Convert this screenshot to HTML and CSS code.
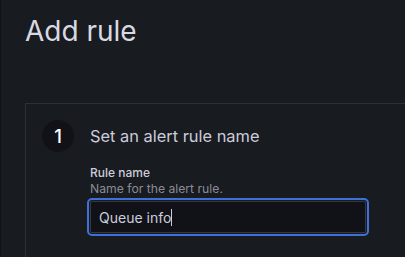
FILE: index.html
```html
<!DOCTYPE html>
<html>
<head>
<meta charset="utf-8">
<link rel="stylesheet" href="styles.css">
</head>
<body>
<div class="page">
  <h1 class="page-title">Add rule</h1>
  <section class="card">
    <div class="step-head">
      <div class="step-num">1</div>
      <h2 class="step-title">Set an alert rule name</h2>
    </div>
    <div class="field">
      <div class="label">Rule name</div>
      <div class="desc">Name for the alert rule.</div>
      <div class="input"><span class="value">Queue info</span><span class="caret"></span></div>
    </div>
  </section>
</div>
</body>
</html>
```
FILE: styles.css
```css
html, body {
  margin: 0;
  padding: 0;
  background: #181b1f;
  height: 100%;
  overflow: hidden;
}
body {
  font-family: Inter, "Noto Sans", sans-serif;
  color: #ccccdc;
}
.page {
  border-left: 1px solid #111217;
  height: 100%;
  padding: 0 0 0 24px;
  box-sizing: border-box;
  display: flex;
  flex-direction: column;
}
.page-title {
  margin: 0;
  padding-top: 14px;
  font-size: 28px;
  font-weight: 400;
  line-height: 34px;
  color: #d8d9e3;
}
.card {
  flex: 1;
  margin-top: 55px;
  border: 1px solid rgba(204,204,220,0.12);
  border-right: none;
  border-bottom: none;
  padding: 16px 0 0 16px;
}
.step-head {
  display: flex;
  align-items: center;
  gap: 16px;
}
.step-num {
  width: 32px;
  height: 32px;
  border-radius: 50%;
  background: #111217;
  color: #fff;
  font-size: 18.5px;
  font-weight: 500;
  display: flex;
  align-items: center;
  justify-content: center;
}
.step-title {
  margin: 0;
  font-size: 16.4px;
  font-weight: 400;
  color: #ccccdc;
}
.field {
  margin-left: 48px;
  margin-top: 13px;
}
.label {
  font-size: 12px;
  font-weight: 500;
  line-height: 16px;
  color: #ccccdc;
}
.desc {
  font-size: 12.2px;
  line-height: 16px;
  color: rgba(204,204,220,0.65);
}
.input {
  margin-top: 4px;
  width: 276px;
  height: 32px;
  box-sizing: border-box;
  background: #111217;
  border: 1px solid rgba(204,204,220,0.2);
  border-radius: 2px;
  outline: 2px solid #3d71d9;
  outline-offset: 1px;
  display: flex;
  align-items: center;
  padding-left: 8px;
  font-size: 14px;
  color: #ccccdc;
}
.caret {
  width: 1px;
  height: 17px;
  background: #ccccdc;
}
```
